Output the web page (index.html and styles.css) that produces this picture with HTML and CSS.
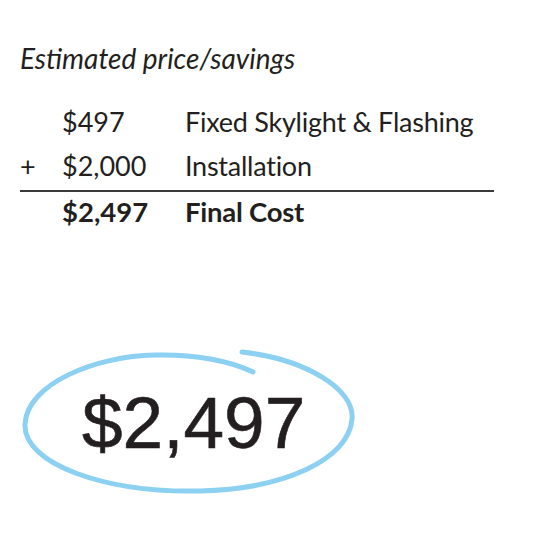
FILE: index.html
```html
<!DOCTYPE html>
<html>
<head>
<meta charset="utf-8">
<link rel="stylesheet" href="styles.css">
</head>
<body>
<div class="page">
  <h1 class="title">Estimated price/savings</h1>
  <div class="table">
    <div class="row">
      <span class="sign"></span><span class="amount">$497</span><span class="desc">Fixed Skylight &amp; Flashing</span>
    </div>
    <div class="row row-last">
      <span class="sign">+</span><span class="amount">$2,000</span><span class="desc">Installation</span>
    </div>
    <div class="row row-total">
      <span class="sign"></span><span class="amount">$2,497</span><span class="desc">Final Cost</span>
    </div>
  </div>
  <div class="result">
    <svg class="circle" width="350" height="165" viewBox="0 0 350 165" fill="none">
      <path d="M227 13 C 290 20, 340 50, 337 80 C 334 120, 270 150, 185 152 C 90 154, 8 125, 10 85 C 12 45, 80 17, 140 16 C 180 15, 215 22, 238 33" stroke="#8cd0f2" stroke-width="5" stroke-linecap="round"/>
    </svg>
    <div class="big">$2,497</div>
  </div>
</div>
</body>
</html>
```
FILE: styles.css
```css
html, body {
  margin: 0;
  padding: 0;
  background: #ffffff;
}
.page {
  width: 544px;
  height: 558px;
  color: #231f20;
  font-family: Lato, "Liberation Sans", sans-serif;
  overflow: hidden;
}
.title {
  margin: 0;
  padding: 43px 0 0 20px;
  font-size: 28px;
  line-height: 30px;
  font-style: italic;
  font-weight: 400;
}
.table {
  margin: 27px 0 0 20px;
  width: 474px;
}
.row {
  display: grid;
  grid-template-columns: 42px 123px 1fr;
  font-size: 27px;
  line-height: 44px;
}
.desc {
  letter-spacing: -0.25px;
}
.row-last {
  padding-bottom: 2px;
  border-bottom: 2px solid #3a3a3a;
}
.row-total {
  font-weight: 700;
  font-size: 27.5px;
  line-height: 40px;
}
.result {
  position: relative;
  margin: 107px 0 0 15px;
  width: 350px;
  height: 165px;
}
.circle {
  position: absolute;
  left: 0;
  top: 0;
}
.big {
  position: relative;
  padding: 44px 0 0 67px;
  font-family: "Liberation Sans", Arial, sans-serif;
  font-size: 73px;
  line-height: 80px;
  -webkit-text-stroke: 0.6px #231f20;
}
```
